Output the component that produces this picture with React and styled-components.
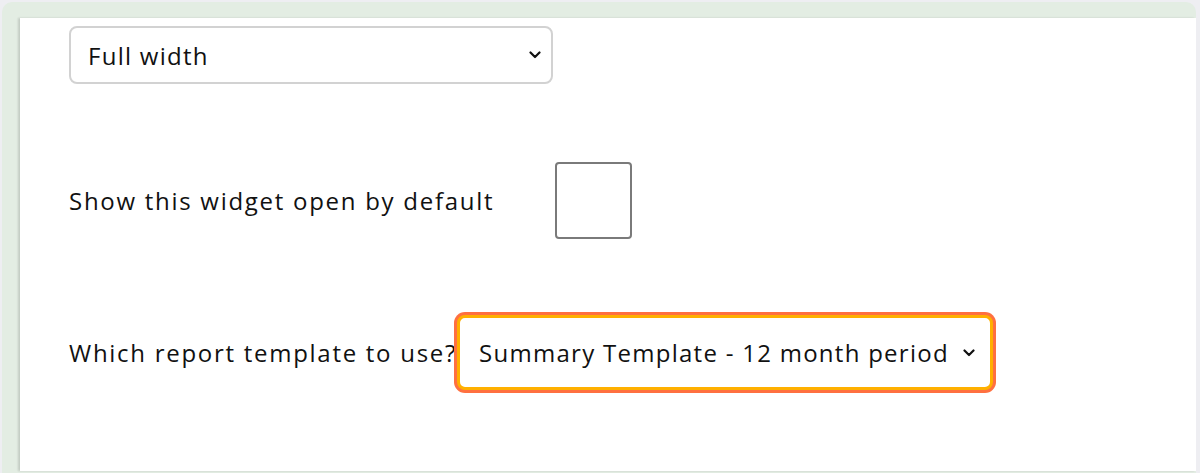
import styled, { createGlobalStyle } from "styled-components";

const Global = createGlobalStyle`
html, body {
  margin: 0;
  padding: 0;
  background: #eeeef2;
}
body {
  font-family: "Open Sans", "Liberation Sans", sans-serif;
  color: #111;
}
`;

function Chevron() {
  return (
    <svg width="12" height="8" viewBox="0 0 12 8">
      <path d="M1.5 1.5 L6 6 L10.5 1.5" fill="none" stroke="#111" strokeWidth="2.2" strokeLinecap="round" strokeLinejoin="round" />
    </svg>
  );
}

function App() {
  return (
    <>
      <Global />
      <Frame>
        <Panel>
          <Row>
            <SelectBox width="484px" height="58px">
              <Select defaultValue="full">
                <option value="full">Full width</option>
                <option value="half">Half width</option>
              </Select>
              <Chevron />
            </SelectBox>
          </Row>
          <Row top="78px" gap="61px">
            <Label>Show this widget open by default</Label>
            <Checkbox type="checkbox" />
          </Row>
          <Row top="76px" gap="0">
            <Label>Which report template to use?</Label>
            <SelectBox width="536px" height="75px" focused>
              <Select defaultValue="summary12">
                <option value="summary12">Summary Template - 12 month period</option>
                <option value="summary6">Summary Template - 6 month period</option>
              </Select>
              <Chevron />
            </SelectBox>
          </Row>
        </Panel>
      </Frame>
    </>
  );
}

export default App;

// styled components

const Frame = styled.div`
margin: 2px 4px 0 2px;
height: 471px;
box-sizing: border-box;
background-color: #e3ede3;
border-radius: 10px 10px 0 0;
padding: 16px 0 2px 18px;
display: flex;
`;

const Panel = styled.div`
flex: 1;
background-color: #fff;
box-shadow: -2px 0 2px rgba(0,0,0,0.14);
padding: 8px 0 0 49px;
display: flex;
flex-direction: column;
`;

const Row = styled.div`
display: flex;
align-items: center;
gap: ${(p) => p.gap || "0"};
margin-top: ${(p) => p.top || "0"};
`;

const Label = styled.label`
font-size: 24px;
letter-spacing: 1.72px;
color: #111;
`;

const SelectBox = styled.div`
width: ${(p) => p.width};
height: ${(p) => p.height};
box-sizing: border-box;
display: flex;
align-items: center;
padding: ${(p) => (p.focused ? "0 15px 0 19px" : "0 10px 0 17px")};
background: #fff;
border-radius: 8px;
border: ${(p) => (p.focused ? "3px solid #ffb000" : "2px solid #d2d2d2")};
box-shadow: ${(p) => (p.focused ? "0 0 0 3px #ff7040" : "none")};
svg {
  flex-shrink: 0;
}
`;

const Select = styled.select`
appearance: none;
flex: 1;
border: none;
outline: none;
background: transparent;
font-family: inherit;
font-size: 24px;
letter-spacing: 1.27px;
color: #111;
padding: 0;
`;

const Checkbox = styled.input`
appearance: none;
margin: 0;
width: 77px;
height: 77px;
border: 2px solid #7a7a7a;
border-radius: 4px;
background: #fff;
`;
